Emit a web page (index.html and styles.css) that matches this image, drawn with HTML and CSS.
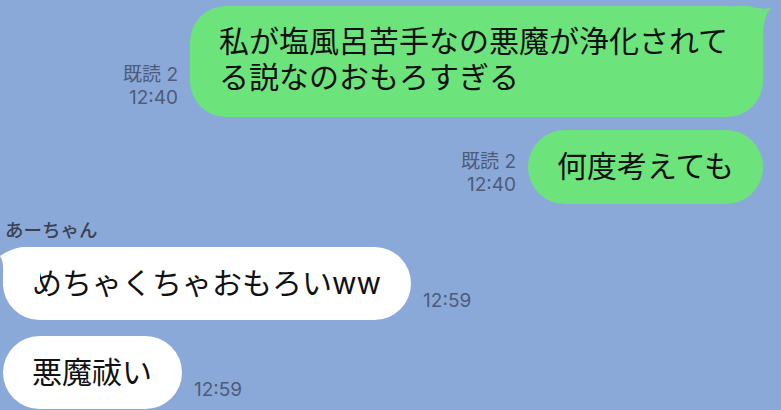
FILE: index.html
```html
<!DOCTYPE html>
<html lang="ja">
<head>
  <meta charset="UTF-8">
  <title>Chat</title>
  <link rel="stylesheet" href="styles.css">
</head>
<body>

  <div class="chat">
    <div class="row row-me first">
      <div class="meta"><span>既読 2</span><span>12:40</span></div>
      <div class="bubble me wide">
        私が塩風呂苦手なの悪魔が浄化されてる説なのおもろすぎる
        <svg class="tail tail-right" viewBox="0 0 40 40" width="40" height="40">
          <path d="M0,0 L16,0 Q26,4 38,2 Q31,9 30,26 L30,40 L0,40 Z" fill="#6de47b"/>
        </svg>
      </div>
    </div>

    <div class="row row-me">
      <div class="meta"><span>既読 2</span><span>12:40</span></div>
      <div class="bubble me">何度考えても</div>
    </div>

    <div class="name">あーちゃん</div>

    <div class="row row-them">
      <div class="bubble them">
        めちゃくちゃおもろいww
        <svg class="tail tail-left" viewBox="0 0 40 40" width="40" height="40">
          <path d="M40,0 L22,0 Q10,2 0,9 Q4,15 3,27 L3,40 L40,40 Z" fill="#fff"/>
        </svg>
      </div>
      <div class="meta"><span>12:59</span></div>
    </div>

    <div class="row row-them">
      <div class="bubble them">悪魔祓い</div>
      <div class="meta"><span>12:59</span></div>
    </div>
  </div>

</body>
</html>
```

FILE: styles.css
```css
body {
  margin: 0;
  background: #8aa9d8;
  font-family: Inter, 'Noto Sans CJK JP', sans-serif;
  overflow: hidden;
}

.chat {
  display: flex;
  flex-direction: column;
  padding-top: 6px;
}

.row {
  display: flex;
  align-items: flex-end;
  gap: 12px;
}

.row-me {
  justify-content: flex-end;
  padding-right: 18px;
  margin-top: 13px;
}

.row-me.first {
  margin-top: 0;
}

.row-them {
  padding-left: 3px;
  margin-top: 16px;
}

.name + .row-them {
  margin-top: 6px;
}

.bubble {
  position: relative;
  font-size: 30px;
  line-height: 36px;
  color: #111;
  padding: 18px 29px 20px 29px;
  border-radius: 38px;
}

.bubble.wide {
  max-width: 573px;
  box-sizing: border-box;
  padding: 17px 29px 22px 29px;
  border-radius: 36px;
}

.me {
  background: #6de47b;
}

.them {
  background: #fff;
  padding: 18px 30px 19px 29px;
}

.tail {
  position: absolute;
  top: 0;
}

.tail-right {
  right: -10px;
}

.tail-left {
  left: -3px;
}

.meta {
  display: flex;
  flex-direction: column;
  align-items: flex-end;
  font-size: 19px;
  line-height: 23px;
  color: #4e5b79;
  margin-bottom: 8px;
}

.row-them .meta {
  align-items: flex-start;
}

.name {
  margin-top: 13px;
  padding-left: 5px;
  font-family: 'Noto Sans CJK JP', sans-serif;
  font-size: 18.5px;
  font-weight: 500;
  line-height: 24px;
  color: #3a4150;
}
```
